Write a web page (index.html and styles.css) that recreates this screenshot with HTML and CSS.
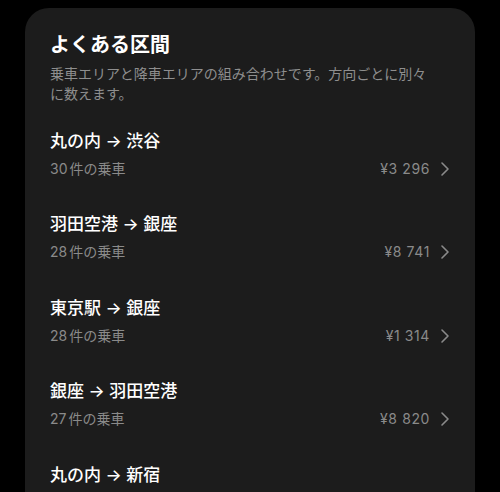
FILE: index.html
```html
<!DOCTYPE html>
<html lang="ja">
<head>
    <meta charset="UTF-8">
    <meta name="viewport" content="width=device-width, initial-scale=1.0">
    <title>よくある区間</title>
    <link rel="stylesheet" href="styles.css">
</head>
<body>
    <main>
        <section class="card">
            <h2 class="card-title">よくある区間</h2>
            <p class="card-desc">乗車エリアと降車エリアの組み合わせです。方向ごとに別々に数えます。</p>
            <ul class="routes">
                <li class="route">
                    <div class="route-name">丸の内 → 渋谷</div>
                    <div class="route-meta">
                        <span>30 件の乗車</span>
                        <span class="route-price">¥3 296
                            <svg class="chevron" viewBox="0 0 10 16" width="10" height="16"><path d="M2 2l6 6-6 6" /></svg>
                        </span>
                    </div>
                </li>
                <li class="route">
                    <div class="route-name">羽田空港 → 銀座</div>
                    <div class="route-meta">
                        <span>28 件の乗車</span>
                        <span class="route-price">¥8 741
                            <svg class="chevron" viewBox="0 0 10 16" width="10" height="16"><path d="M2 2l6 6-6 6" /></svg>
                        </span>
                    </div>
                </li>
                <li class="route">
                    <div class="route-name">東京駅 → 銀座</div>
                    <div class="route-meta">
                        <span>28 件の乗車</span>
                        <span class="route-price">¥1 314
                            <svg class="chevron" viewBox="0 0 10 16" width="10" height="16"><path d="M2 2l6 6-6 6" /></svg>
                        </span>
                    </div>
                </li>
                <li class="route">
                    <div class="route-name">銀座 → 羽田空港</div>
                    <div class="route-meta">
                        <span>27 件の乗車</span>
                        <span class="route-price">¥8 820
                            <svg class="chevron" viewBox="0 0 10 16" width="10" height="16"><path d="M2 2l6 6-6 6" /></svg>
                        </span>
                    </div>
                </li>
                <li class="route">
                    <div class="route-name">丸の内 → 新宿</div>
                    <div class="route-meta">
                        <span>26 件の乗車</span>
                        <span class="route-price">¥4 102
                            <svg class="chevron" viewBox="0 0 10 16" width="10" height="16"><path d="M2 2l6 6-6 6" /></svg>
                        </span>
                    </div>
                </li>
            </ul>
        </section>
    </main>
</body>
</html>
```

FILE: styles.css
```css
/* Basic reset */
body, html {
    margin: 0;
    padding: 0;
    overflow: hidden;
    background-color: #000;
    font-family: Inter, "Noto Sans CJK JP", sans-serif;
}

main {
    padding: 8px 25px 0;
}

/* Card */
.card {
    background-color: #1c1c1c;
    border-radius: 24px;
    padding: 23px 25px 0;
    color: #fff;
}

.card-title {
    font-size: 20px;
    line-height: 28px;
    font-weight: 700;
    margin: 0 0 5px;
}

.card-desc {
    max-width: 380px;
    font-size: 14px;
    line-height: 20px;
    color: #8e8e8e;
    margin: 0 0 8px;
}

/* Route list */
.routes {
    list-style: none;
    margin: 0;
    padding: 0;
}

.route {
    padding: 16.75px 0;
}

.route-name {
    font-size: 17px;
    line-height: 24px;
    font-weight: 500;
    margin-bottom: 6px;
}

.route-meta {
    display: flex;
    justify-content: space-between;
    align-items: center;
    font-size: 14px;
    line-height: 20px;
    color: #8a8a8a;
    word-spacing: -2px;
}

.route-price {
    display: flex;
    align-items: center;
    gap: 10px;
    letter-spacing: 0.6px;
    word-spacing: 0;
}

.chevron {
    fill: none;
    stroke: #8a8a8a;
    stroke-width: 1.6;
    stroke-linecap: round;
    stroke-linejoin: round;
}
```
